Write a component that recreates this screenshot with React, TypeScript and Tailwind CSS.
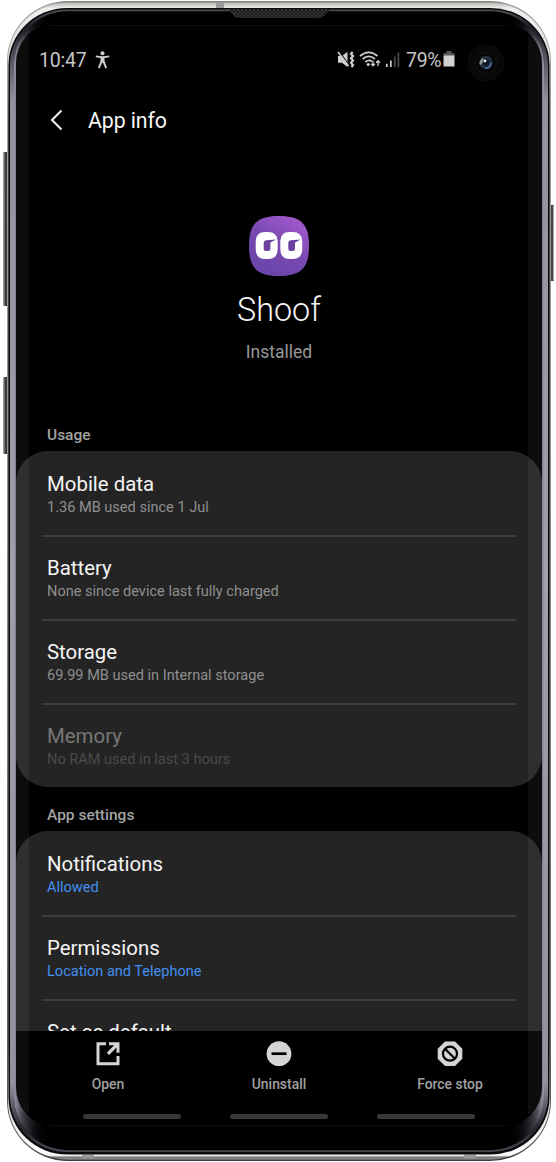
import React from "react";

function DeviceFrame() {
  return (
    <svg className="absolute inset-0" width="556" height="1162" viewBox="0 0 556 1162" aria-hidden="true">
      <defs>
        <linearGradient id="metal" x1="0" y1="0" x2="0" y2="1">
          <stop offset="0" stopColor="#777a76" />
          <stop offset="0.003" stopColor="#a5a7a2" />
          <stop offset="0.5" stopColor="#8a8a8c" />
          <stop offset="0.99" stopColor="#555" />
          <stop offset="1" stopColor="#3a3a3a" />
        </linearGradient>
        <linearGradient id="silver" x1="0" y1="0" x2="0" y2="1">
          <stop offset="0" stopColor="#b5b7b2" />
          <stop offset="0.005" stopColor="#efefed" />
          <stop offset="0.05" stopColor="#dededc" />
          <stop offset="0.1" stopColor="#777" />
          <stop offset="0.9" stopColor="#777" />
          <stop offset="0.95" stopColor="#ddd" />
          <stop offset="0.993" stopColor="#ffffff" />
          <stop offset="0.9965" stopColor="#f4f2f3" />
          <stop offset="0.998" stopColor="#777476" />
          <stop offset="1" stopColor="#9b9799" />
        </linearGradient>
        <linearGradient id="edge" x1="0" y1="0" x2="0" y2="1">
          <stop offset="0" stopColor="#4c4c55" />
          <stop offset="0.016" stopColor="#1d1d24" />
          <stop offset="0.04" stopColor="#50505a" />
          <stop offset="0.08" stopColor="#9291a0" />
          <stop offset="0.5" stopColor="#a29fac" />
          <stop offset="0.94" stopColor="#9291a0" />
          <stop offset="0.98" stopColor="#24242c" />
          <stop offset="1" stopColor="#4a4a54" />
        </linearGradient>
        <linearGradient id="glow" gradientUnits="userSpaceOnUse" x1="14" y1="0" x2="544" y2="0">
          <stop offset="0" stopColor="#9997a6" />
          <stop offset="0.015" stopColor="#5d5b69" stopOpacity="0.75" />
          <stop offset="0.04" stopColor="#22212a" stopOpacity="0.4" />
          <stop offset="0.065" stopColor="#000" stopOpacity="0" />
          <stop offset="0.935" stopColor="#000" stopOpacity="0" />
          <stop offset="0.96" stopColor="#22212a" stopOpacity="0.4" />
          <stop offset="0.985" stopColor="#5d5b69" stopOpacity="0.75" />
          <stop offset="1" stopColor="#9997a6" />
        </linearGradient>
        <linearGradient id="key" x1="0" y1="0" x2="1" y2="0">
          <stop offset="0" stopColor="#b0b0b0" />
          <stop offset="0.45" stopColor="#333" />
          <stop offset="1" stopColor="#555" />
        </linearGradient>
        <pattern id="mesh" width="4" height="4" patternUnits="userSpaceOnUse">
          <rect width="4" height="4" fill="#161616" />
          <path d="M0 0L4 4M4 0L0 4" stroke="#484848" strokeWidth="0.7" />
        </pattern>
        <radialGradient id="lens">
          <stop offset="0" stopColor="#030712" />
          <stop offset="0.4" stopColor="#101d30" />
          <stop offset="0.8" stopColor="#293846" />
          <stop offset="1" stopColor="#06080c" />
        </radialGradient>
      </defs>
      <rect x="3" y="152" width="6" height="154" rx="1" fill="url(#key)" />
      <rect x="3" y="377" width="6" height="77" rx="1" fill="url(#key)" />
      <rect x="549" y="205" width="5" height="76" rx="1" fill="#454545" />
      <path d="M553.5 206V280" stroke="#aaa" />
      <rect x="7" y="1" width="544" height="1160" rx="61" ry="60" fill="url(#metal)" />
      <rect x="8" y="2.5" width="542" height="1157" rx="60" ry="58" fill="url(#silver)" />
      <path d="M216 2H224V8H216ZM82 1154.5H94V1158H82ZM464 1154.5H476V1158H464Z" fill="#999" />
      <rect x="8.5" y="8" width="541" height="1146.5" rx="59" ry="57" fill="#090a0c" />
      <rect x="10" y="9.5" width="538" height="1142.5" rx="57" ry="56" fill="url(#edge)" />
      <rect x="14" y="11.2" width="530" height="1139" rx="54" ry="54" fill="#000" />
      <rect x="14" y="11.2" width="530" height="1139" rx="54" ry="54" fill="url(#glow)" />
      <rect x="16" y="25" width="526" height="1100.5" rx="36" ry="38" fill="#000" />
      <path d="M228 9H330L324 16Q322 18 318 18H240Q236 18 234 16Z" fill="url(#mesh)" />
      <path d="M50 25.5H508M50 1125.5H508" stroke="#071014" />
      <circle cx="486" cy="63" r="18" fill="#080809" stroke="#090e18" strokeWidth=".8" />
      <circle cx="486" cy="63" r="10.5" fill="#050506" stroke="#15151a" />
      <circle cx="486" cy="62.5" r="7.2" fill="url(#lens)" />
      <ellipse cx="481.5" cy="61.5" rx="1.5" ry="3.5" transform="rotate(25 481.5 61.5)" fill="#87928f" />
      <circle cx="485" cy="61" r="1.4" fill="#d9edf5" />
      <path d="M485 68Q490 69 491 63" stroke="#476d9a" strokeWidth="1.8" fill="none" />
    </svg>
  );
}

function StatusIcons() {
  return (
    <svg width="64" height="18" viewBox="337 50 64 18" className="shrink-0" fill="none" stroke="#cfcfcf">
      <path d="M338 55H342L347.5 50.8V66L342 61.7H338Z" fill="#cfcfcf" stroke="none" />
      <path d="M338.8 50L349 64" stroke="#000" strokeWidth="1.2" />
      <path d="M338 51L348.5 65" strokeWidth="1.5" />
      <path d="M352.6 50.8L351 53L353 55L351 57.2L353 59.5L351 61.7L353 64L351.5 66" strokeWidth="2.2" />
      <path d="M360 55Q368.8 47.6 377.5 55M362.6 58Q368.8 52.8 375 58M365.2 61Q368.8 58.2 372.2 60.2" strokeWidth="1.7" />
      <circle cx="368.2" cy="63.5" r="1.5" fill="#cfcfcf" stroke="none" />
      <path d="M373 59.8V64.5M371.1 62.7L373 64.8L374.9 62.7M378 65V60M376.1 61.8L378 59.7L379.9 61.8" strokeWidth="1.3" />
      <path d="M386.8 62.8V66M390.8 59.5V66" strokeWidth="1.7" />
      <path d="M394.8 55.5V66M398.4 51.5V66" stroke="#4c4c4c" strokeWidth="1.7" />
    </svg>
  );
}

function StatusBar() {
  return (
    <div className="flex h-[34px] items-center pl-[23px] pt-[1px] text-[19.5px] leading-6 text-[#c5c5c5]">
      <span className="w-[56px] whitespace-nowrap pt-[2px] tracking-[-0.2px]">10:47</span>
      <svg width="15" height="18" viewBox="0 0 15 18" fill="#cfcfcf">
        <circle cx="7.5" cy="2.2" r="2" />
        <path d="M.8 4.6Q7.5 6.1 14.2 4.6V6.2L9.5 7.1V10L12 16.8L10.4 17.4L7.8 11.5H7.2L4.6 17.4L3 16.8L5.5 10V7.1L.8 6.2Z" />
      </svg>
      <div className="ml-[227px] flex items-center">
        <StatusIcons />
        <span className="ml-[5px] w-[37px] whitespace-nowrap pt-[2px] tracking-[-0.3px]">79%</span>
        <svg width="12" height="17" viewBox="0 0 12 17">
          <path d="M3.5 0H8.5V2H11.5V5H.5V2H3.5Z" fill="#555" />
          <path d="M.5 4.5H11.5V15.5H.5Z" fill="#d2d2d2" />
        </svg>
      </div>
    </div>
  );
}

function AppLogo() {
  return (
    <svg width="62" height="62" viewBox="0 0 62 62">
      <defs>
        <linearGradient id="purple" x1=".85" y1="0" x2=".2" y2="1">
          <stop stopColor="#a65bd0" />
          <stop offset=".5" stopColor="#7949b0" />
          <stop offset="1" stopColor="#6745a9" />
        </linearGradient>
        <g id="eye">
          <path d="M9.5 0H12Q22 0 22 9.5V17Q22 27 12 27H9.5Q0 27 0 17V9.5Q0 0 9.5 0Z" fill="#fff" />
          <path d="M20.5 7.6L10.5 8.2Q8 8.4 8 11V16.5Q8 19 10.5 19H12.2Q14.7 19 14.7 16.5V10.4Z" fill="#6b409f" />
        </g>
      </defs>
      <path d="M31 1C53 1 61 9 61 31S53 61 31 61S1 53 1 31S9 1 31 1Z" fill="url(#purple)" />
      <use href="#eye" x="7.7" y="17" />
      <use href="#eye" x="32.3" y="17" />
    </svg>
  );
}

type RowData = { title: string; detail?: string; tone?: "blue" | "dim" };

function SettingRow({ title, detail, tone }: RowData) {
  const titleColor = tone === "dim" ? "text-[#777777]" : "text-[#f4f4f4]";
  const detailColor = tone === "blue" ? "text-[#418ff0]" : tone === "dim" ? "text-[#4a4a4a]" : "text-[#8f8f8f]";
  return (
    <div className="mx-[26px] h-[84px] border-b-2 border-[#3d3d3d] px-[5px] pt-[19px] last:h-[82px] last:border-b-0">
      <div className={`text-[20.4px] leading-[25px] ${titleColor}`}>{title}</div>
      <div className={`mt-[1px] text-[14.55px] leading-5 ${detailColor}`}>{detail}</div>
    </div>
  );
}

function Section({ title, rows }: { title: string; rows: RowData[] }) {
  return (
    <section>
      <h2 className="flex h-[44px] items-center pl-[31px] pt-[11px] text-[15.5px] font-medium leading-5 text-[#a3a3a3]">{title}</h2>
      <div className="rounded-[32px] bg-[#242424] pt-[2px]">
        {rows.map((row) => <SettingRow key={row.title} {...row} />)}
      </div>
    </section>
  );
}

const usage: RowData[] = [
  { title: "Mobile data", detail: "1.36 MB used since 1 Jul" },
  { title: "Battery", detail: "None since device last fully charged" },
  { title: "Storage", detail: "69.99 MB used in Internal storage" },
  { title: "Memory", detail: "No RAM used in last 3 hours", tone: "dim" },
];

const settings: RowData[] = [
  { title: "Notifications", detail: "Allowed", tone: "blue" },
  { title: "Permissions", detail: "Location and Telephone", tone: "blue" },
  { title: "Set as default" },
];

function Action({ label, children }: { label: string; children: React.ReactNode }) {
  return (
    <button className="flex w-[171px] flex-col items-center pt-[10px] text-[13.9px] font-medium leading-5 text-[#a0a0a0]">
      <svg width="26" height="26" viewBox="0 0 26 26">{children}</svg>
      <span className="mt-[7px]">{label}</span>
    </button>
  );
}

export default function App() {
  return (
    <div className="relative h-[1162px] w-[556px] overflow-hidden bg-white font-['Roboto',sans-serif]">
      <DeviceFrame />
      <div className="relative ml-[16px] flex h-[1125px] w-[526px] flex-col pt-[42px]">
        <StatusBar />
        <header className="flex h-[88px] items-center pl-[32px] text-[21.3px] text-[#f6f6f6]">
          <svg width="18" height="24" viewBox="0 0 18 24" fill="none" stroke="#f4f4f4" strokeWidth="2">
            <path d="M13.5 2.5L4 12L13.5 21.5" />
          </svg>
          <h1 className="ml-[22px] pt-[1px] tracking-[-0.1px]">App info</h1>
        </header>
        <div className="flex h-[243px] flex-col items-center pt-[51px]">
          <AppLogo />
          <div className="mt-[13px] text-[32.3px] font-light leading-10 text-[#f5f5f5]">Shoof</div>
          <div className="mt-[10px] text-[17.5px] leading-6 text-[#999]">Installed</div>
        </div>
        <main className="h-[624px] overflow-hidden">
          <Section title="Usage" rows={usage} />
          <Section title="App settings" rows={settings} />
        </main>
        <footer className="flex h-[94px] flex-col">
          <div className="flex justify-center">
            <Action label="Open">
              <path d="M11 2.8H3V22.8H23V15" fill="none" stroke="#d5d5d5" strokeWidth="3" />
              <path d="M14 1.3H24.5V11.8H21.5V6.6L14 14.1L11.8 11.8L19.2 4.3H14Z" fill="#d5d5d5" />
            </Action>
            <Action label="Uninstall">
              <circle cx="13" cy="12.7" r="12.4" fill="#d5d5d5" />
              <path d="M5.5 12.7H20.5" stroke="#000" strokeWidth="2.7" />
            </Action>
            <Action label="Force stop">
              <path d="M8 .5H18L25.3 7.7V17.7L18 25H8L.7 17.7V7.7Z" fill="#d5d5d5" />
              <circle cx="13" cy="12.7" r="7" fill="none" stroke="#000" strokeWidth="2.2" />
              <path d="M8 7.7L18 17.7" stroke="#000" strokeWidth="2.2" />
            </Action>
          </div>
          <div className="mt-[20px] flex justify-center gap-[49px]">
            <span className="h-[5px] w-[98px] rounded-full bg-[#383838]" />
            <span className="h-[5px] w-[98px] rounded-full bg-[#383838]" />
            <span className="h-[5px] w-[98px] rounded-full bg-[#383838]" />
          </div>
        </footer>
      </div>
      <div className="pointer-events-none absolute left-[16px] top-[36px] h-[1078px] w-[13px] rounded-l-[30px] bg-white/5" />
      <div className="pointer-events-none absolute left-[528px] top-[36px] h-[1078px] w-[14px] rounded-r-[30px] bg-white/5" />
    </div>
  );
}
